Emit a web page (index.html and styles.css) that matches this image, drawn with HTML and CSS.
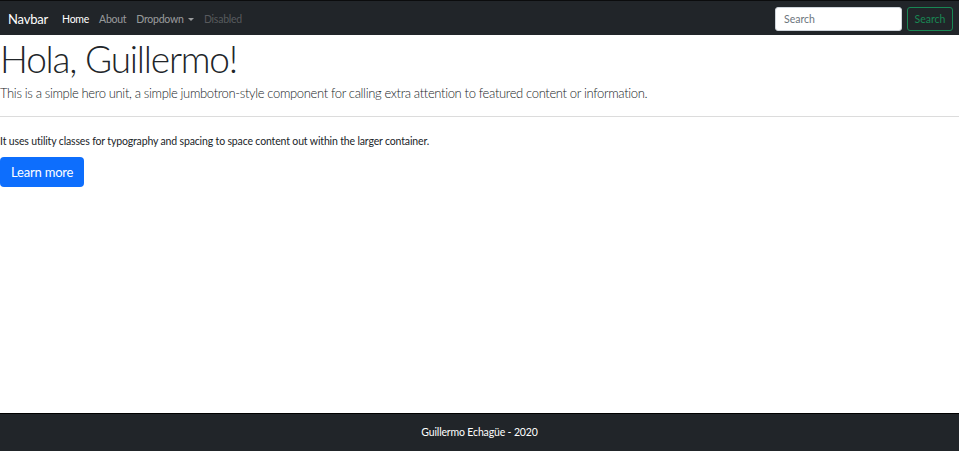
FILE: index.html
```html
<!DOCTYPE html>
<html lang="es">
<head>
<meta charset="utf-8">
<title>Hola</title>
<link rel="stylesheet" href="styles.css">
</head>
<body>
<nav class="navbar">
  <a class="brand" href="#">Navbar</a>
  <ul class="nav-links">
    <li><a class="nav-link active" href="#">Home</a></li>
    <li><a class="nav-link" href="#">About</a></li>
    <li><a class="nav-link dropdown" href="#">Dropdown <span class="caret"></span></a></li>
    <li><a class="nav-link disabled" href="#">Disabled</a></li>
  </ul>
  <form class="search">
    <input class="search-input" type="text" placeholder="Search">
    <button class="search-btn" type="button">Search</button>
  </form>
</nav>
<main class="hero">
  <h1 class="display">Hola, Guillermo!</h1>
  <p class="lead">This is a simple hero unit, a simple jumbotron-style component for calling extra attention to featured content or information.</p>
  <hr class="divider">
  <p class="body-text">It uses utility classes for typography and spacing to space content out within the larger container.</p>
  <a class="btn-primary" href="#">Learn more</a>
</main>
<footer class="footer">Guillermo Echagüe - 2020</footer>
</body>
</html>
```
FILE: styles.css
```css
* { box-sizing: border-box; }
html, body { margin: 0; height: 100%; }
body {
  font-family: "Segoe UI", Lato, "Open Sans", "Liberation Sans", sans-serif;
  font-size: 10.5px;
  color: #212529;
  display: flex;
  flex-direction: column;
  min-height: 100vh;
  background: #fff;
}
a { text-decoration: none; }
.navbar {
  display: flex;
  align-items: center;
  height: 35px;
  flex-shrink: 0;
  background: #212529;
  border-top: 1px solid #0b0c0d;
  padding: 1px 6px 0 8px;
}
.brand {
  color: #fff;
  font-size: 13px;
  letter-spacing: -0.2px;
  margin-right: 9px;
}
.nav-links {
  display: flex;
  list-style: none;
  margin: 0;
  padding: 0;
  flex: 1;
}
.nav-link {
  display: block;
  color: rgba(255,255,255,.55);
  padding: 0 5px;
  font-size: 10.5px;
  letter-spacing: -0.25px;
}
.nav-link.active { color: #fff; }
.nav-link.disabled { color: rgba(255,255,255,.25); }
.caret {
  display: inline-block;
  width: 0; height: 0;
  border-left: 3px solid transparent;
  border-right: 3px solid transparent;
  border-top: 3px solid rgba(255,255,255,.55);
  vertical-align: 2px;
  margin-left: 2px;
}
.search { display: flex; gap: 5px; align-items: center; }
.search-input {
  width: 127px;
  height: 24px;
  border: 1px solid #ced4da;
  border-radius: 3px;
  padding: 0 8px;
  font: inherit;
  font-size: 10.5px;
  color: #212529;
  background: #fff;
}
.search-input::placeholder { color: #6c757d; }
.search-btn {
  width: 46px;
  height: 24px;
  border: 1px solid #198754;
  border-radius: 3px;
  background: transparent;
  color: #198754;
  font: inherit;
  font-size: 10.5px;
  padding: 0;
}
.hero {
  flex: 1;
}
.display {
  font-size: 37px;
  font-weight: 300;
  letter-spacing: -1.2px;
  line-height: 44px;
  margin: 0;
  padding-top: 2px;
}
.lead {
  font-size: 13px;
  font-weight: 300;
  letter-spacing: -0.35px;
  line-height: 20px;
  margin: 2px 0 13px 0;
}
.divider {
  border: 0;
  border-top: 1px solid #dcdcdc;
  margin: 0 0 16px 0;
}
.body-text {
  margin: 0 0 8px 0;
  font-size: 10.5px;
  letter-spacing: -0.15px;
  line-height: 16px;
}
.btn-primary {
  display: inline-block;
  background: #0d6efd;
  color: #fff;
  font-size: 13px;
  letter-spacing: -0.2px;
  border-radius: 4px;
  padding: 5px 11px;
  line-height: 20px;
}
.footer {
  flex-shrink: 0;
  background: #212529;
  border-top: 1px solid #000;
  color: #fff;
  text-align: center;
  font-size: 10.5px;
  letter-spacing: -0.15px;
  height: 38px;
  line-height: 37px;
}
```
